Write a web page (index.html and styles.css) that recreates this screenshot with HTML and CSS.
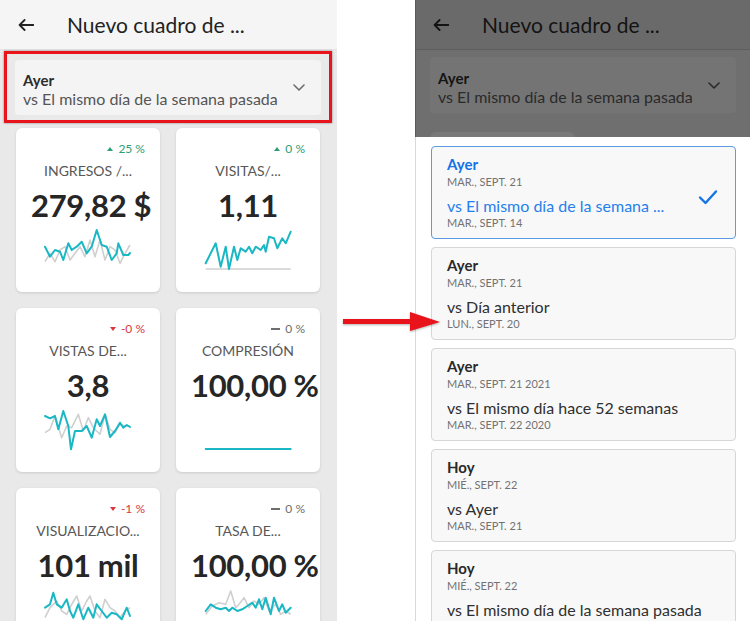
FILE: index.html
```html
<!DOCTYPE html>
<html lang="es">
<head>
<meta charset="utf-8">
<title>Nuevo cuadro de resumen</title>
<link rel="stylesheet" href="styles.css">
</head>
<body>
<div class="stage">
  <section class="phone left">
    <header class="bar">
      <svg class="back" width="16" height="12" viewBox="0 0 16 12"><path d="M15.5 6H1.6M6.6 1L1.6 6l5 5" fill="none" stroke="currentColor" stroke-width="1.8" stroke-linecap="round" stroke-linejoin="round"/></svg>
      <h1 class="bar-title">Nuevo cuadro de ...</h1>
    </header>
    <div class="content">
      <div class="highlight">
        <div class="selector">
          <div class="sel-text">
            <div class="sel-title">Ayer</div>
            <div class="sel-sub">vs El mismo día de la semana pasada</div>
          </div>
          <svg class="chev" width="12" height="7" viewBox="0 0 12 7"><path d="M1 1l5 5 5-5" fill="none" stroke="currentColor" stroke-width="1.6" stroke-linecap="round" stroke-linejoin="round"/></svg>
        </div>
      </div>
      <div class="grid">
        <div class="card">
          <div class="delta up"><span class="tri"></span>25 %</div>
          <div class="c-title">INGRESOS /...</div>
          <div class="c-value">279,82 $</div>
          <svg class="spark" width="86" height="46" viewBox="0 0 86 46">
            <polyline class="prev" points="0,35.7 5,27.3 10,35.7 15,24 20,20.7 25,34 30,27.3 35,20.7 40,30.7 45,14 50,30.7 55,14 60,34 65,20.7 70,24 75,37.3 80,27.3 85,19"/>
            <polyline class="cur" points="0,20.7 5,30.7 10,24 15,25.7 18.3,34 23.3,17.3 26.7,24 31.7,20.7 36.7,15.7 41.7,27.3 46.7,20.7 51.7,4 56.7,19 61.7,20.7 66.7,34 71.7,27.3 73.3,17.3 78.3,29 83.3,29 85,27"/>
          </svg>
        </div>
        <div class="card">
          <div class="delta up"><span class="tri"></span>0 %</div>
          <div class="c-title">VISITAS/...</div>
          <div class="c-value">1,11</div>
          <svg class="spark" width="86" height="46" viewBox="0 0 86 46">
            <line class="prev" x1="0.7" y1="43" x2="85.7" y2="43"/>
            <polyline class="cur" points="0.7,37.3 10.7,17.3 15.7,40.7 20.7,20.7 24,43 29,20.7 32.3,34 35.7,22.3 40.7,25.7 44,20.7 47.3,27.3 50.7,20.7 55.7,24 59,19 60.7,25.7 64,10.7 69,12.3 72.3,22.3 77.3,12.3 80.7,17.3 85.7,5.7"/>
          </svg>
        </div>
        <div class="card">
          <div class="delta down"><span class="tri"></span>-0 %</div>
          <div class="c-title">VISTAS DE...</div>
          <div class="c-value">3,8</div>
          <svg class="spark" width="86" height="46" viewBox="0 0 86 46">
            <polyline class="prev" points="0,26.7 5,23.3 10,10 16.7,31.7 21.7,20 26.7,21.7 33.3,8.3 38.3,25 43.3,11.7 48.3,21.7 55,28.3 60,8.3 65,23.3 70,26.7 75,18.3 80,20 85,20"/>
            <polyline class="cur" points="0,10 5,12.3 10,10 13.3,23.3 18.3,5 23.3,20 26,43.3 30,25 36.7,25 41.7,20 46.7,31.7 51.7,13.3 55,20 60,8.3 65,31 70,25 75,16.7 78.3,21.7 81.7,19 85,21"/>
          </svg>
        </div>
        <div class="card">
          <div class="delta flat"><span class="dash"></span>0 %</div>
          <div class="c-title">COMPRESIÓN</div>
          <div class="c-value">100,00 %</div>
          <svg class="spark" width="86" height="46" viewBox="0 0 86 46">
            <line class="cur" x1="0.7" y1="43" x2="85.7" y2="43"/>
          </svg>
        </div>
        <div class="card">
          <div class="delta down"><span class="tri"></span>-1 %</div>
          <div class="c-title">VISUALIZACIO...</div>
          <div class="c-value">101 mil</div>
          <svg class="spark" width="86" height="46" viewBox="0 0 86 46">
            <polyline class="prev" points="0,31.7 5,21.7 11.7,15 16.7,25 21.7,28.3 26.7,18.3 31.7,10 36.7,25 41.7,15 45,10 50,25 55,31.7 60,13.3 65,21.7 70,25 75,31.7 80,25 85,21.7"/>
            <polyline class="cur" points="0,21.7 5,18.3 8.3,6.7 11.7,18.3 16.7,21.7 21.7,13.3 25,25 28.3,31.7 33.3,18.3 38.3,33.3 43.3,21.7 48.3,31.7 51.7,18.3 56.7,25 61.7,31.7 66.7,26.7 71.7,28.3 76.7,33.3 81.7,21.7 85,30"/>
          </svg>
        </div>
        <div class="card">
          <div class="delta flat"><span class="dash"></span>0 %</div>
          <div class="c-title">TASA DE...</div>
          <div class="c-value">100,00 %</div>
          <svg class="spark" width="86" height="46" viewBox="0 0 86 46">
            <polyline class="prev" points="0.7,28.3 7.3,20 14,16.7 20.7,18.3 25.7,5 30.7,21.7 34,18.3 39,11.7 44,21.7 49,15 54,18.3 59,11.7 64,25 70.7,18.3 75.7,28.3 80.7,25 85.7,28.3"/>
            <polyline class="cur" points="0.7,25 5.7,18.3 10.7,21.7 15.7,23.3 20.7,21.7 24,25 27.3,21.7 32.3,25 37.3,23.3 42.3,20 47.3,16.7 50.7,21.7 54,13.3 57.3,23.3 60.7,11.7 65.7,28.3 69,11.7 74,25 77.3,18.3 80.7,26.7 85.7,21.7"/>
          </svg>
        </div>
      </div>
    </div>
  </section>

  <section class="phone right">
    <div class="dim">
      <header class="bar dark">
        <svg class="back" width="16" height="12" viewBox="0 0 16 12"><path d="M15.5 6H1.6M6.6 1L1.6 6l5 5" fill="none" stroke="currentColor" stroke-width="1.8" stroke-linecap="round" stroke-linejoin="round"/></svg>
        <h2 class="bar-title">Nuevo cuadro de ...</h2>
      </header>
      <div class="dim-body">
        <div class="selector dark">
          <div class="sel-text">
            <div class="sel-title">Ayer</div>
            <div class="sel-sub">vs El mismo día de la semana pasada</div>
          </div>
          <svg class="chev" width="12" height="7" viewBox="0 0 12 7"><path d="M1 1l5 5 5-5" fill="none" stroke="currentColor" stroke-width="1.6" stroke-linecap="round" stroke-linejoin="round"/></svg>
        </div>
        <div class="peek"></div>
      </div>
    </div>
    <div class="sheet">
      <div class="item selected">
        <div class="it-text">
          <div class="it-title">Ayer</div>
          <div class="it-date">MAR., SEPT. 21</div>
          <div class="it-vs">vs El mismo día de la semana ...</div>
          <div class="it-date2">MAR., SEPT. 14</div>
        </div>
        <svg class="check" width="20" height="16" viewBox="0 0 20 16"><path d="M2 8.5l5.5 5.5L18 2.5" fill="none" stroke="currentColor" stroke-width="2.4" stroke-linecap="round" stroke-linejoin="round"/></svg>
      </div>
      <div class="item">
        <div class="it-text">
          <div class="it-title">Ayer</div>
          <div class="it-date">MAR., SEPT. 21</div>
          <div class="it-vs">vs Día anterior</div>
          <div class="it-date2">LUN., SEPT. 20</div>
        </div>
      </div>
      <div class="item">
        <div class="it-text">
          <div class="it-title">Ayer</div>
          <div class="it-date">MAR., SEPT. 21 2021</div>
          <div class="it-vs">vs El mismo día hace 52 semanas</div>
          <div class="it-date2">MAR., SEPT. 22 2020</div>
        </div>
      </div>
      <div class="item">
        <div class="it-text">
          <div class="it-title">Hoy</div>
          <div class="it-date">MIÉ., SEPT. 22</div>
          <div class="it-vs">vs Ayer</div>
          <div class="it-date2">MAR., SEPT. 21</div>
        </div>
      </div>
      <div class="item">
        <div class="it-text">
          <div class="it-title">Hoy</div>
          <div class="it-date">MIÉ., SEPT. 22</div>
          <div class="it-vs">vs El mismo día de la semana pasada</div>
        </div>
      </div>
    </div>
  </section>

  <svg class="pointer" width="98" height="22" viewBox="0 0 98 22">
    <rect x="0" y="8" width="70" height="5" fill="#e8131b"/>
    <polygon points="67,1 97,11 67,20" fill="#e8131b"/>
  </svg>
</div>
</body>
</html>
```

FILE: styles.css
```css
* { box-sizing: border-box; }

html, body {
  margin: 0;
  padding: 0;
  background: #ffffff;
}

body {
  font-family: "Lato", "Noto Sans", sans-serif;
  color: #2c2c2c;
}

.stage {
  position: relative;
  width: 750px;
  height: 621px;
  overflow: hidden;
  display: flex;
  justify-content: space-between;
}

.phone {
  display: flex;
  flex-direction: column;
  height: 621px;
  overflow: hidden;
}

.left {
  width: 337px;
  background: #e9e9e9;
}

.right {
  width: 335px;
  background: #ffffff;
}

/* Header bar */
.bar {
  flex: none;
  height: 50px;
  display: flex;
  align-items: center;
  gap: 33px;
  padding-left: 18px;
  background: #f5f5f5;
  border-bottom: 1px solid #e4e4e4;
  color: #222222;
}

.back { display: block; flex: none; }

.bar-title {
  margin: 0;
  font-size: 21px;
  font-weight: 400;
  line-height: 26px;
  white-space: nowrap;
}

.bar.dark {
  background: #6a6a6a;
  border-bottom: 1px solid #5e5e5e;
  color: #131313;
  padding-left: 17px;
}

/* Date selector */
.content {
  flex: 1;
  display: flex;
  flex-direction: column;
}

.highlight {
  margin: 1px 5px 0 4px;
  border: 3px solid #e8131b;
  padding: 6px 8px 5px;
  box-shadow: 0 0 2px rgba(0, 0, 0, 0.45);
}

.selector {
  height: 55px;
  display: flex;
  align-items: center;
  justify-content: space-between;
  padding: 0 16px 0 8px;
  background: #f4f4f4;
  border-radius: 4px;
  color: #6e6e6e;
}

.sel-text { padding-top: 5px; }

.sel-title {
  font-size: 15px;
  font-weight: 700;
  line-height: 18px;
  color: #2c2c2c;
}

.sel-sub {
  font-size: 16px;
  line-height: 20px;
  color: #555555;
  white-space: nowrap;
}

.chev { display: block; flex: none; }

.selector.dark {
  height: 56px;
  background: #747474;
  color: #2a2a2a;
}

.selector.dark .sel-title { color: #141414; }
.selector.dark .sel-sub { color: #2a2a2a; }

/* Cards grid */
.grid {
  margin-top: 5px;
  padding: 0 16px;
  display: grid;
  grid-template-columns: 144px 144px;
  grid-auto-rows: 164px;
  column-gap: 16px;
  row-gap: 16px;
}

.card {
  background: #ffffff;
  border-radius: 6px;
  box-shadow: 0 1px 3px rgba(0, 0, 0, 0.13);
  padding: 14px 15px 0;
  display: flex;
  flex-direction: column;
}

.delta {
  align-self: flex-end;
  display: flex;
  align-items: center;
  gap: 5px;
  font-size: 12px;
  line-height: 14px;
}

.delta.up { color: #2d9d78; }
.delta.down { color: #d7373f; }
.delta.flat { color: #6e6e6e; }

.delta.up .tri {
  width: 0;
  height: 0;
  border-left: 3.5px solid transparent;
  border-right: 3.5px solid transparent;
  border-bottom: 4px solid currentColor;
}

.delta.down .tri {
  width: 0;
  height: 0;
  border-left: 3.5px solid transparent;
  border-right: 3.5px solid transparent;
  border-top: 4px solid currentColor;
}

.dash {
  width: 9px;
  height: 1.6px;
  background: currentColor;
}

.c-title {
  margin-top: 6px;
  font-size: 14px;
  letter-spacing: 0;
  line-height: 18px;
  color: #575757;
  text-align: center;
  white-space: nowrap;
}

.c-value {
  margin-top: 6px;
  font-size: 31px;
  letter-spacing: -0.3px;
  font-weight: 700;
  line-height: 38px;
  color: #262626;
  text-align: center;
  white-space: nowrap;
}

.spark {
  display: block;
  margin-top: 2px;
  align-self: center;
  overflow: visible;
}

.spark .cur {
  fill: none;
  stroke: #1ab7c4;
  stroke-width: 2;
  stroke-linejoin: round;
  stroke-linecap: round;
}

.spark .prev {
  fill: none;
  stroke: #cfcfcf;
  stroke-width: 1.6;
  stroke-linejoin: round;
}

/* Right phone: dimmed page behind the sheet */
.dim {
  flex: none;
  height: 137px;
  background: #6f6f6f;
  border-left: 1px solid #5a5a5a;
  overflow: hidden;
}

.dim-body {
  padding: 7px 14px 0 14px;
}

.peek {
  margin-top: 19px;
  width: 145px;
  height: 24px;
  background: #797979;
  border-radius: 6px;
}

/* Bottom sheet */
.sheet {
  flex: 1;
  border-left: 1px solid #d9d9d9;
  padding: 9px 14px 0 15px;
  display: flex;
  flex-direction: column;
  gap: 8px;
}

.item {
  flex: none;
  height: 93px;
  display: flex;
  align-items: center;
  justify-content: space-between;
  padding: 8px 17px 0 15px;
  background: #f8f8f8;
  border: 1px solid #d6d6d6;
  border-radius: 4px;
}

.it-text {
  align-self: flex-start;
}

.it-title {
  font-size: 15px;
  font-weight: 700;
  line-height: 18px;
  color: #2a2a2a;
}

.it-date, .it-date2 {
  font-size: 11px;
  line-height: 14px;
  color: #727272;
  white-space: nowrap;
}

.it-date { margin-top: 2px; }
.it-date2 { margin-top: 1px; }

.it-vs {
  margin-top: 7px;
  font-size: 16px;
  line-height: 19px;
  color: #2f2f2f;
  white-space: nowrap;
}

.item.selected {
  border-color: #5a9be6;
}

.item.selected .it-title { color: #1473e6; }
.item.selected .it-vs { color: #2680eb; }

.check {
  display: block;
  flex: none;
  color: #1473e6;
}

/* Annotation arrow */
.pointer {
  position: absolute;
  left: 343px;
  top: 311px;
  filter: drop-shadow(0 1px 1px rgba(0, 0, 0, 0.3));
}
```
